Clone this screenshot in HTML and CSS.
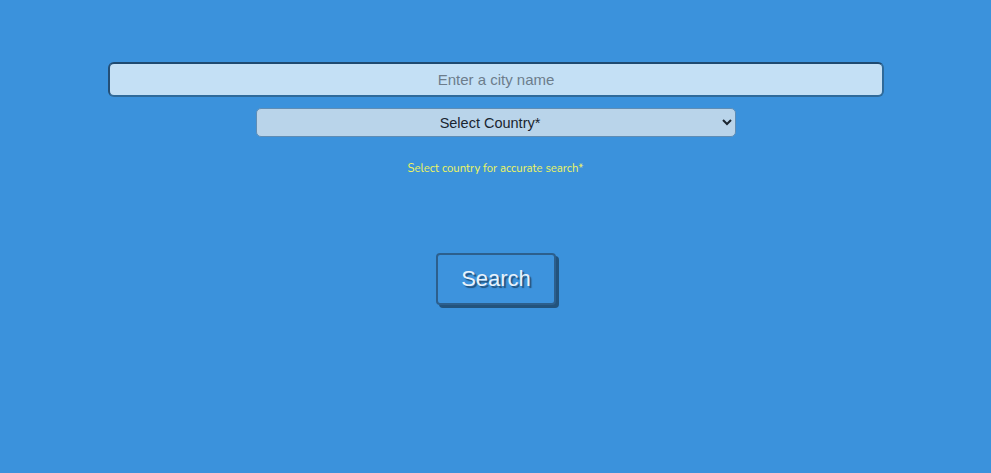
FILE: index.html
```html
<!DOCTYPE html>
<html>
<head>
<meta charset="utf-8">
<link rel="stylesheet" href="styles.css">
</head>
<body>
<main class="page">
  <input class="city" type="text" placeholder="Enter a city name">
  <select class="country">
    <option>Select Country*</option>
  </select>
  <p class="hint">Select country for accurate search*</p>
  <button class="search">Search</button>
</main>
</body>
</html>
```
FILE: styles.css
```css
html, body {
  margin: 0;
  padding: 0;
  background: #3b92dc;
  height: 100%;
}
.page {
  display: flex;
  flex-direction: column;
  align-items: center;
  padding-top: 62px;
  font-family: "Liberation Sans", Arial, sans-serif;
}
.city {
  box-sizing: border-box;
  width: 776px;
  height: 35px;
  margin-left: 1px;
  border: 2px solid #2f6a9a;
  border-top-color: #1f4a70;
  border-left-color: #244f76;
  border-radius: 6px;
  background: #c4e0f5;
  text-align: center;
  font-family: "Liberation Sans", Arial, sans-serif;
  font-size: 15px;
  color: #333;
  outline: none;
}
.city::placeholder {
  color: #6c7d8c;
}
.country {
  box-sizing: border-box;
  width: 480px;
  height: 29px;
  margin-top: 11px;
  margin-left: 1px;
  border: 1px solid #5f8db5;
  border-radius: 5px;
  background: #b9d4ea;
  text-align: center;
  text-align-last: center;
  font-family: "Liberation Sans", Arial, sans-serif;
  font-size: 14.5px;
  color: #1a2530;
}
.hint {
  margin: 24px 0 0 0;
  font-family: "Nunito", "Lato", sans-serif;
  font-size: 11.3px;
  color: #eef560;
  line-height: 16px;
}
.search {
  margin-top: 76px;
  margin-left: 1px;
  box-sizing: border-box;
  width: 120px;
  height: 52px;
  border: 2px solid #2c5f8d;
  border-radius: 4px;
  background: #3d93dd;
  box-shadow: 3px 3px 0 #22537d;
  color: #e8f2fb;
  font-family: "Liberation Sans", Arial, sans-serif;
  font-size: 22px;
  text-shadow: 2px 2px 1px #24527b;
  cursor: pointer;
}
```
